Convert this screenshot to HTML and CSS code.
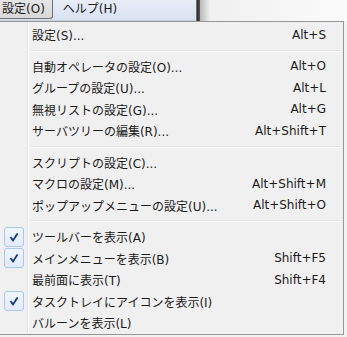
FILE: index.html
```html
<!DOCTYPE html>
<html lang="ja">
<head>
    <meta charset="UTF-8">
    <title>設定メニュー</title>
    <link rel="stylesheet" href="styles.css">
</head>
<body>
    <div class="top">
        <div class="menubar">
            <span class="mb-item open">設定(O)</span>
            <span class="mb-item">ヘルプ(H)</span>
        </div>
        <div class="frame-edge"></div>
        <div class="backdrop"></div>
    </div>

    <div class="menu">
        <div class="row"><span class="gutter"></span><span class="label">設定(S)...</span><span class="key">Alt+S</span></div>
        <div class="sep"></div>
        <div class="row"><span class="gutter"></span><span class="label">自動オペレータの設定(O)...</span><span class="key">Alt+O</span></div>
        <div class="row"><span class="gutter"></span><span class="label">グループの設定(U)...</span><span class="key">Alt+L</span></div>
        <div class="row"><span class="gutter"></span><span class="label">無視リストの設定(G)...</span><span class="key">Alt+G</span></div>
        <div class="row"><span class="gutter"></span><span class="label">サーバツリーの編集(R)...</span><span class="key">Alt+Shift+T</span></div>
        <div class="sep"></div>
        <div class="row"><span class="gutter"></span><span class="label">スクリプトの設定(C)...</span><span class="key"></span></div>
        <div class="row"><span class="gutter"></span><span class="label">マクロの設定(M)...</span><span class="key">Alt+Shift+M</span></div>
        <div class="row"><span class="gutter"></span><span class="label">ポップアップメニューの設定(U)...</span><span class="key">Alt+Shift+O</span></div>
        <div class="sep"></div>
        <div class="row">
            <span class="gutter"><span class="check"><svg width="20" height="20" viewBox="0 0 20 20"><path d="M6.5 10 L9 13.5 L13.5 6.5" fill="none" stroke="#14327a" stroke-width="1.7"/></svg></span></span>
            <span class="label">ツールバーを表示(A)</span><span class="key"></span>
        </div>
        <div class="row">
            <span class="gutter"><span class="check"><svg width="20" height="20" viewBox="0 0 20 20"><path d="M6.5 10 L9 13.5 L13.5 6.5" fill="none" stroke="#14327a" stroke-width="1.7"/></svg></span></span>
            <span class="label">メインメニューを表示(B)</span><span class="key">Shift+F5</span>
        </div>
        <div class="row"><span class="gutter"></span><span class="label">最前面に表示(T)</span><span class="key">Shift+F4</span></div>
        <div class="row">
            <span class="gutter"><span class="check"><svg width="20" height="20" viewBox="0 0 20 20"><path d="M6.5 10 L9 13.5 L13.5 6.5" fill="none" stroke="#14327a" stroke-width="1.7"/></svg></span></span>
            <span class="label">タスクトレイにアイコンを表示(I)</span><span class="key"></span>
        </div>
        <div class="row"><span class="gutter"></span><span class="label">バルーンを表示(L)</span><span class="key"></span></div>
    </div>
</body>
</html>
```

FILE: styles.css
```css
html, body {
    margin: 0;
    padding: 0;
}
body {
    width: 347px;
    height: 337px;
    overflow: hidden;
    background: #f2f2f2;
    font-family: "DejaVu Sans", "Noto Sans CJK JP", sans-serif;
    font-size: 12px;
    color: #1a1a1a;
}
.top {
    display: flex;
    height: 21px;
}
.menubar {
    width: 196px;
    display: flex;
    align-items: flex-start;
    background: linear-gradient(#e8edf7, #d9e1f1);
    border-bottom: 1px solid #c9d1e0;
    box-sizing: border-box;
}
.mb-item {
    height: 19px;
    line-height: 18px;
    padding: 0 7px 0 6px;
    box-sizing: border-box;
}
.mb-item.open {
    background: linear-gradient(#e6e6e6, #d8d8d8);
    border: 1px solid #707070;
    border-top: none;
    border-left: none;
    border-radius: 0 0 3px 0;
    padding-left: 2px;
    margin-right: 4px;
}
.frame-edge {
    width: 4px;
    background: linear-gradient(to right, #8a8a8a, #2e2e2e 40%, #5a5a5a);
}
.backdrop {
    flex: 1;
    background: linear-gradient(to right, #b8b8b8, #f0f0f0 10px, #f6f6f6 60%, #fafafa);
}
.menu {
    width: 344px;
    height: 314px;
    border: 1px solid #979797;
    border-left: none;
    box-sizing: border-box;
    padding-top: 2px;
    background-color: #f0f0f0;
    background-image: linear-gradient(to right, transparent 27px, #e2e3e3 27px, #e2e3e3 28px, #ffffff 28px, #ffffff 29px, transparent 29px);
}
.row {
    display: flex;
    align-items: center;
    height: 21.5px;
}
.gutter {
    width: 27px;
    height: 100%;
    display: flex;
    align-items: center;
}
.check {
    width: 20px;
    height: 20px;
    margin-left: 4px;
    box-sizing: border-box;
    border: 1px solid #a8c8f0;
    border-radius: 3px;
    background: linear-gradient(#f0f5fd, #e2ebfa);
    display: flex;
}
.check svg {
    margin: -1px;
}
.label {
    flex: 1;
    padding-left: 5px;
    white-space: nowrap;
}
.key {
    padding-right: 17px;
    white-space: nowrap;
}
.sep {
    height: 10px;
    margin: 0 3px 0 30px;
    position: relative;
}
.sep::after {
    content: "";
    display: block;
    position: relative;
    top: 4px;
    height: 1px;
    border-bottom: 1px solid #ffffff;
    background: #e0e0e0;
}
```
